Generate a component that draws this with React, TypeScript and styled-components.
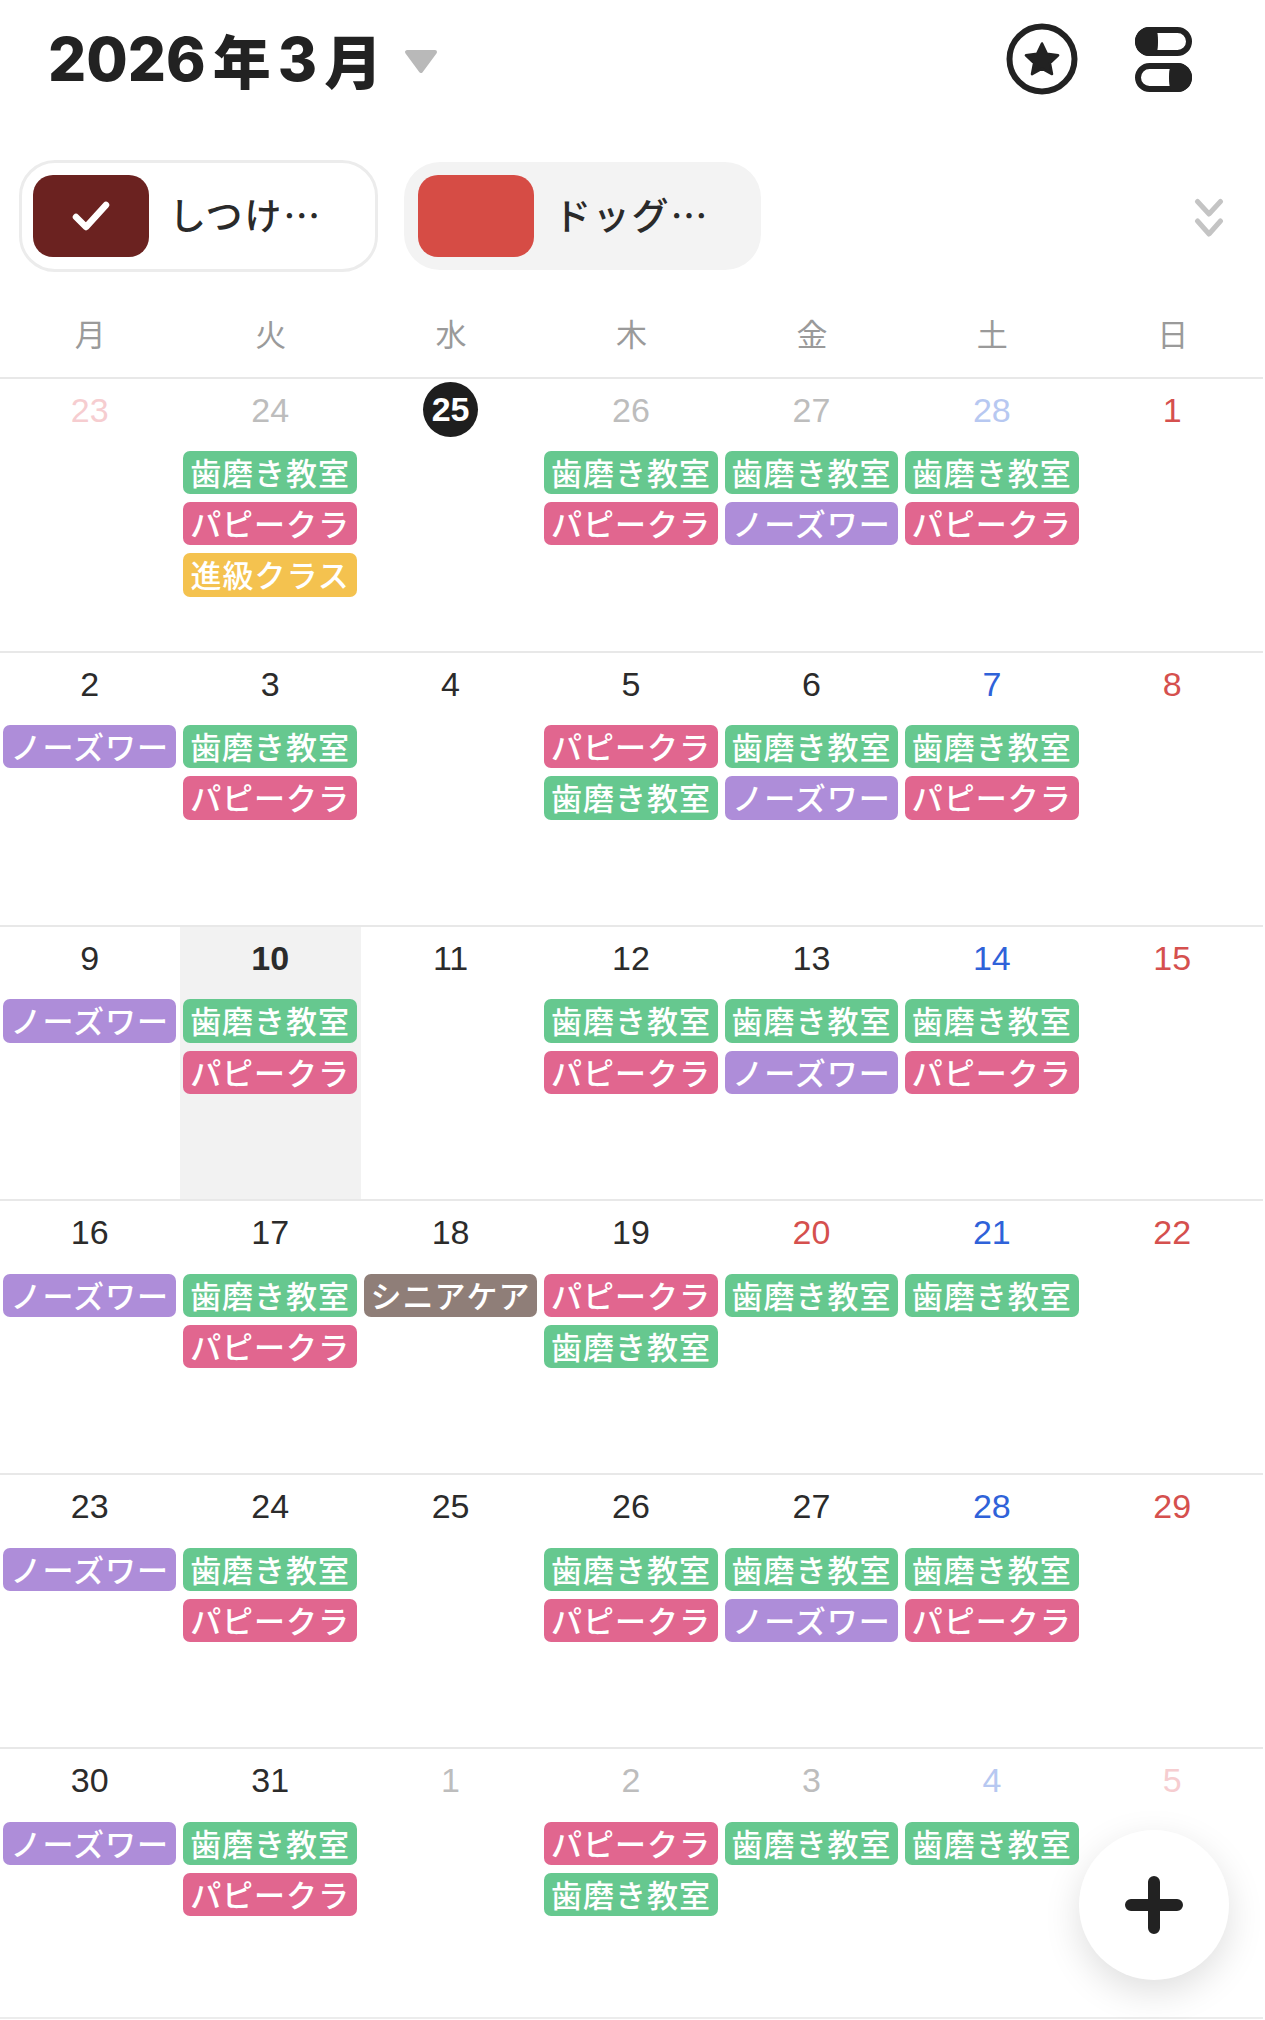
import styled, { createGlobalStyle } from "styled-components";

const GlobalStyle = createGlobalStyle`
  html, body {
    margin: 0;
    padding: 0;
    background: #fff;
  }
  body {
    font-family: "Noto Sans CJK JP", sans-serif;
  }
`;

const Page = styled.div`
  position: relative;
  width: 1265px;
  height: 2020px;
  overflow: hidden;
  color: #222;
`;

const TopBar = styled.header`
  display: flex;
  align-items: center;
  height: 118px;
  padding-left: 48px;
  margin-bottom: 42px;
`;

const Title = styled.h1`
  display: flex;
  align-items: center;
  margin: 0;
  font-family: "Inter", "Noto Sans CJK JP", sans-serif;
  font-size: 60px;
  font-weight: 800;
  line-height: 70px;
  color: #222;
`;

const TitleUnit = styled.span`
  font-family: "Noto Sans CJK JP", sans-serif;
  font-size: 58px;
  font-weight: 900;
  margin: 0 7px;
`;

const Caret = styled.svg`
  margin-left: 15px;
  margin-top: 4px;
`;

const TopIcons = styled.div`
  display: flex;
  align-items: center;
  gap: 57px;
  margin-left: auto;
  margin-right: 73px;
`;

const ChipRow = styled.div`
  display: flex;
  align-items: center;
  height: 112px;
  padding-left: 19px;
  padding-right: 41px;
  gap: 26px;
`;

const Chip = styled.div<{ $active?: boolean }>`
  display: flex;
  align-items: center;
  box-sizing: border-box;
  width: ${(p) => (p.$active ? "359px" : "357px")};
  height: ${(p) => (p.$active ? "112px" : "108px")};
  padding-left: ${(p) => (p.$active ? "11px" : "14px")};
  border-radius: 36px;
  background: ${(p) => (p.$active ? "#fff" : "#f3f3f3")};
  border: ${(p) => (p.$active ? "3px solid #ececec" : "none")};
`;

const Swatch = styled.div<{ $color: string }>`
  display: flex;
  align-items: center;
  justify-content: center;
  flex-shrink: 0;
  width: 116px;
  height: 82px;
  border-radius: 20px;
  background: ${(p) => p.$color};
`;

const ChipLabel = styled.span`
  margin-left: 20px;
  margin-top: -4px;
  font-size: 37px;
  font-weight: 500;
  line-height: 1;
  letter-spacing: 1.8px;
  white-space: nowrap;
  color: #2a2a2a;
`;

const Collapse = styled.svg`
  margin-left: auto;
  margin-top: 3px;
`;

const WeekHeader = styled.div`
  display: grid;
  grid-template-columns: repeat(7, 1fr);
  width: 1263px;
  height: 104.5px;
`;

const WeekDay = styled.div`
  padding-top: 38px;
  text-align: center;
  font-size: 31px;
  line-height: 46px;
  color: #9a9a9a;
`;

const Week = styled.div<{ $height: number }>`
  display: grid;
  grid-template-columns: repeat(7, 1fr);
  box-sizing: border-box;
  width: 1263px;
  height: ${(p) => p.$height}px;
  border-top: 2px solid #e8e8e8;
`;

const ClosingRule = styled.div`
  width: 1263px;
  height: 2px;
  background: #ececec;
`;

const Day = styled.div<{ $selected?: boolean }>`
  display: flex;
  flex-direction: column;
  box-sizing: border-box;
  min-width: 0;
  padding: 0 4px 0 3px;
  background: ${(p) => (p.$selected ? "#f2f2f2" : "transparent")};
`;

const DateRow = styled.div`
  display: flex;
  align-items: center;
  justify-content: center;
  height: 62px;
  margin-bottom: 10.5px;
`;

const tones: Record<string, string> = {
  normal: "#2b2b2b",
  sat: "#2f62d9",
  sun: "#d5504e",
  mutedNormal: "#bdbdbd",
  mutedSat: "#b7c8f1",
  mutedSun: "#f6cdd0",
};

const DateNumber = styled.span<{ $tone: string; $bold?: boolean }>`
  font-family: "Liberation Sans", sans-serif;
  font-size: 34px;
  line-height: 1;
  font-weight: ${(p) => (p.$bold ? 700 : 400)};
  color: ${(p) => tones[p.$tone]};
`;

const TodayBadge = styled.span`
  display: flex;
  align-items: center;
  justify-content: center;
  width: 55px;
  height: 55px;
  border-radius: 50%;
  background: #1e1e1e;
  color: #fff;
  font-family: "Liberation Sans", sans-serif;
  font-size: 34px;
  font-weight: 700;
`;

const EventList = styled.div`
  display: flex;
  flex-direction: column;
  gap: 8px;
`;

const Event = styled.div<{ $color: string }>`
  display: flex;
  align-items: center;
  justify-content: center;
  height: 43.2px;
  padding-bottom: 2px;
  box-sizing: border-box;
  border-radius: 7px;
  background: ${(p) => p.$color};
  color: #fff;
  font-size: 31px;
  font-weight: 500;
  letter-spacing: 1px;
  white-space: nowrap;
`;

const Fab = styled.button`
  position: absolute;
  left: 1079px;
  top: 1830px;
  display: flex;
  align-items: center;
  justify-content: center;
  width: 150px;
  height: 150px;
  padding: 0;
  border: none;
  border-radius: 50%;
  background: #fff;
  box-shadow: 0 12px 36px rgba(0, 0, 0, 0.13);
`;

const eventTypes = {
  h: { label: "歯磨き教室", color: "#66c88f" },
  p: { label: "パピークラ", color: "#e1668f" },
  s: { label: "進級クラス", color: "#f4c24f" },
  n: { label: "ノーズワー", color: "#ae8dd9" },
  c: { label: "シニアケア", color: "#8f7e78" },
};

type EventKey = keyof typeof eventTypes;

interface Cell {
  date: number;
  tone: string;
  events: EventKey[];
  today?: boolean;
  selected?: boolean;
}

const c = (date: number, tone: string, events = "", extra: Partial<Cell> = {}): Cell => ({
  date,
  tone,
  events: events.split("") as EventKey[],
  ...extra,
});

const weeks: Cell[][] = [
  [
    c(23, "mutedSun"),
    c(24, "mutedNormal", "hps"),
    c(25, "normal", "", { today: true }),
    c(26, "mutedNormal", "hp"),
    c(27, "mutedNormal", "hn"),
    c(28, "mutedSat", "hp"),
    c(1, "sun"),
  ],
  [
    c(2, "normal", "n"),
    c(3, "normal", "hp"),
    c(4, "normal"),
    c(5, "normal", "ph"),
    c(6, "normal", "hn"),
    c(7, "sat", "hp"),
    c(8, "sun"),
  ],
  [
    c(9, "normal", "n"),
    c(10, "normal", "hp", { selected: true }),
    c(11, "normal"),
    c(12, "normal", "hp"),
    c(13, "normal", "hn"),
    c(14, "sat", "hp"),
    c(15, "sun"),
  ],
  [
    c(16, "normal", "n"),
    c(17, "normal", "hp"),
    c(18, "normal", "c"),
    c(19, "normal", "ph"),
    c(20, "sun", "h"),
    c(21, "sat", "h"),
    c(22, "sun"),
  ],
  [
    c(23, "normal", "n"),
    c(24, "normal", "hp"),
    c(25, "normal"),
    c(26, "normal", "hp"),
    c(27, "normal", "hn"),
    c(28, "sat", "hp"),
    c(29, "sun"),
  ],
  [
    c(30, "normal", "n"),
    c(31, "normal", "hp"),
    c(1, "mutedNormal"),
    c(2, "mutedNormal", "ph"),
    c(3, "mutedNormal", "h"),
    c(4, "mutedSat", "h"),
    c(5, "mutedSun"),
  ],
];

const weekDays = ["月", "火", "水", "木", "金", "土", "日"];

function StarIcon() {
  return (
    <svg width="72" height="72" viewBox="0 0 72 72">
      <circle cx="36" cy="36" r="32.5" fill="none" stroke="#222" strokeWidth="6" />
      <path
        d="M36 20.5l4.9 10.3 11.2 1.5-8.2 7.7 2.1 11.1-10-5.4-10 5.4 2.1-11.1-8.2-7.7 11.2-1.5z"
        fill="#222"
        stroke="#222"
        strokeWidth="2.5"
        strokeLinejoin="round"
      />
    </svg>
  );
}

function ToggleIcon() {
  return (
    <svg width="57" height="65" viewBox="0 0 57 65">
      <rect x="3" y="3" width="51" height="23" rx="11.5" fill="none" stroke="#222" strokeWidth="6" />
      <path d="M14.5 0H20c2 3 3 6.500 3 14.500s-1 11.500-3 14.500h-5.500a14.500 14.500 0 0 1 0-29z" fill="#222" />
      <rect x="3" y="39" width="51" height="23" rx="11.5" fill="none" stroke="#222" strokeWidth="6" />
      <path d="M42.500 36H37c-2 3-3 6.500-3 14.500s1 11.500 3 14.500h5.500a14.500 14.500 0 0 0 0-29z" fill="#222" />
    </svg>
  );
}

function App() {
  return (
    <Page>
      <GlobalStyle />
      <TopBar>
        <Title>
          2026<TitleUnit>年</TitleUnit>3<TitleUnit>月</TitleUnit>
        </Title>
        <Caret width="34" height="25" viewBox="0 0 34 25">
          <path d="M3 3h28L17 22z" fill="#b9b9b9" stroke="#b9b9b9" strokeWidth="4" strokeLinejoin="round" />
        </Caret>
        <TopIcons>
          <StarIcon />
          <ToggleIcon />
        </TopIcons>
      </TopBar>

      <ChipRow>
        <Chip $active>
          <Swatch $color="#6b2220">
            <svg width="38" height="30" viewBox="0 0 38 30">
              <path d="M4 16l10 10L34 4" fill="none" stroke="#fff" strokeWidth="6.5" strokeLinecap="round" strokeLinejoin="round" />
            </svg>
          </Swatch>
          <ChipLabel>しつけ…</ChipLabel>
        </Chip>
        <Chip>
          <Swatch $color="#d64c45" />
          <ChipLabel>ドッグ…</ChipLabel>
        </Chip>
        <Collapse width="30" height="40" viewBox="0 0 30 40">
          <path d="M3.500 3.500l11.500 12.500L26.500 3.500M3.500 23l11.500 13 11.500-13" fill="none" stroke="#c4c4c4" strokeWidth="5" strokeLinecap="round" strokeLinejoin="round" />
        </Collapse>
      </ChipRow>

      <WeekHeader>
        {weekDays.map((d) => (
          <WeekDay key={d}>{d}</WeekDay>
        ))}
      </WeekHeader>

      {weeks.map((week, i) => (
        <Week key={i} $height={i === weeks.length - 1 ? 270 : 274.2}>
          {week.map((cell, j) => (
            <Day key={j} $selected={cell.selected}>
              <DateRow>
                {cell.today ? (
                  <TodayBadge>{cell.date}</TodayBadge>
                ) : (
                  <DateNumber $tone={cell.tone} $bold={cell.selected}>
                    {cell.date}
                  </DateNumber>
                )}
              </DateRow>
              <EventList>
                {cell.events.map((key, k) => (
                  <Event key={k} $color={eventTypes[key].color}>
                    {eventTypes[key].label}
                  </Event>
                ))}
              </EventList>
            </Day>
          ))}
        </Week>
      ))}
      <ClosingRule />

      <Fab>
        <svg width="60" height="60" viewBox="0 0 60 60">
          <path d="M30 7v46M7 30h46" fill="none" stroke="#222" strokeWidth="12" strokeLinecap="round" />
        </svg>
      </Fab>
    </Page>
  );
}

export default App;
